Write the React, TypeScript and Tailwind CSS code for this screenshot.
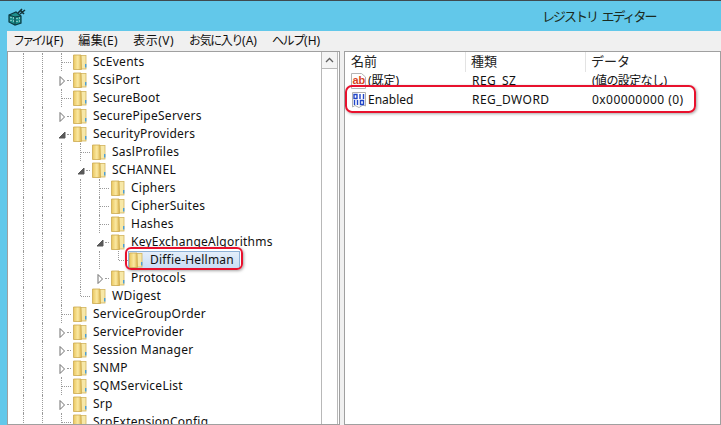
const font = "font-['Noto_Sans','Noto_Sans_CJK_JP',sans-serif]";

type Node = "open" | "closed" | "leaf" | "last";
type Row = { name: string; level: number; node: Node; selected?: boolean };

const rows: Row[] = [
  { name: "ScEvents", level: 0, node: "leaf" },
  { name: "ScsiPort", level: 0, node: "closed" },
  { name: "SecureBoot", level: 0, node: "leaf" },
  { name: "SecurePipeServers", level: 0, node: "closed" },
  { name: "SecurityProviders", level: 0, node: "open" },
  { name: "SaslProfiles", level: 1, node: "leaf" },
  { name: "SCHANNEL", level: 1, node: "open" },
  { name: "Ciphers", level: 2, node: "leaf" },
  { name: "CipherSuites", level: 2, node: "leaf" },
  { name: "Hashes", level: 2, node: "leaf" },
  { name: "KeyExchangeAlgorithms", level: 2, node: "open" },
  { name: "Diffie-Hellman", level: 3, node: "last", selected: true },
  { name: "Protocols", level: 2, node: "closed" },
  { name: "WDigest", level: 1, node: "last" },
  { name: "ServiceGroupOrder", level: 0, node: "leaf" },
  { name: "ServiceProvider", level: 0, node: "closed" },
  { name: "Session Manager", level: 0, node: "closed" },
  { name: "SNMP", level: 0, node: "closed" },
  { name: "SQMServiceList", level: 0, node: "leaf" },
  { name: "Srp", level: 0, node: "closed" },
  { name: "SrpExtensionConfig", level: 0, node: "leaf" },
];

function Folder() {
  return (
    <svg width="14" height="16" viewBox="0 0 14 16" className="shrink-0">
      <defs>
        <linearGradient id="leaf" x1="0" y1="0" x2="1" y2="0">
          <stop offset="0" stopColor="#e9c65f" />
          <stop offset="0.55" stopColor="#fbe9a2" />
          <stop offset="1" stopColor="#dcb44e" />
        </linearGradient>
      </defs>
      <rect x="6" y="1.5" width="7" height="13.5" fill="#f7e8a8" stroke="#d2b35c" strokeWidth="0.8" />
      <path d="M0.5 1 L8 1 L8.5 15.5 L0.5 15.5 Z" fill="url(#leaf)" stroke="#cba94f" strokeWidth="0.8" />
      <rect x="12" y="10" width="1.4" height="3.5" fill="#4b9fd8" />
    </svg>
  );
}

function NodeCell({ node }: { node: Node }) {
  return (
    <div className="relative w-[19px] h-[18px] shrink-0">
      {node === "last" && <div className="absolute left-[9px] top-0 h-[9px] border-l border-dotted border-[#9a9a9a]" />}
      {node === "leaf" && <div className="absolute left-[9px] top-0 h-[18px] border-l border-dotted border-[#9a9a9a]" />}
      {(node === "last" || node === "leaf") && (
        <div className="absolute left-[10px] top-[9px] w-[9px] border-t border-dotted border-[#9a9a9a]" />
      )}
      {(node === "closed" || node === "open") && (
        <div className="absolute left-[15px] top-[9px] w-[4px] border-t border-dotted border-[#9a9a9a]" />
      )}
      {node === "closed" && (
        <svg width="7" height="10" viewBox="0 0 7 10" className="absolute left-[7px] top-[5px]">
          <path d="M1 .5 L5.5 5 L1 9.5 Z" fill="#fff" stroke="#6f6f6f" />
        </svg>
      )}
      {node === "open" && (
        <svg width="8" height="8" viewBox="0 0 8 8" className="absolute left-[6px] top-[6px]">
          <path d="M7 1 L7 7 L1 7 Z" fill="#595959" stroke="#595959" />
        </svg>
      )}
    </div>
  );
}

function TreeRow({ row }: { row: Row }) {
  const cells = Array.from({ length: row.level + 2 });
  return (
    <div className="flex items-center h-[18px]">
      {cells.map((_, i) => (
        <div key={i} className="w-[19px] h-[18px] shrink-0 pl-[9px]">
          <div className="h-full border-l border-dotted border-[#9a9a9a]" />
        </div>
      ))}
      <NodeCell node={row.node} />
      <div className="w-[2px] shrink-0" />
      {row.selected ? (
        <div className="relative -ml-[2px] flex items-center h-[18px] w-[112px] bg-gradient-to-b from-[#e4eefa] to-[#c9def5] border border-[#8fb2d6]">
          <Folder />
          <span className="ml-[7px] text-[12px] tracking-[0.2px] text-[#111]">{row.name}</span>
          <div className="absolute -left-[4px] -top-[5px] w-[118px] h-[23px] rounded-[6px] border-2 border-[#e8112d] shadow-[1px_1px_3px_rgba(0,0,0,0.35)]" />
        </div>
      ) : (
        <>
          <Folder />
          <span className="ml-[6px] text-[12px] tracking-[0.25px] text-[#111] whitespace-nowrap">{row.name}</span>
        </>
      )}
    </div>
  );
}

function Scrollbar() {
  return (
    <div className="w-[17px] mr-[1px] shrink-0 border-x border-[#b8b8b8] bg-white flex flex-col">
      <div className="h-[17px] flex items-center justify-center bg-[#f4f4f4] border-b border-[#b8b8b8]">
        <svg width="9" height="6" viewBox="0 0 9 6">
          <path d="M1 5 L4.5 1.5 L8 5" fill="none" stroke="#606060" strokeWidth="1.3" />
        </svg>
      </div>
      <div className="flex-1" />
    </div>
  );
}

function RegSzIcon() {
  return (
    <svg width="16" height="16" viewBox="0 0 16 16" className="shrink-0">
      <path d="M0.5 .5 H10.5 L14.5 4 V15.5 H0.5 Z" fill="#fff" stroke="#b5b5b5" />
      <text x="1.5" y="11" fontSize="11" fontWeight="700" fill="#d8451f" fontFamily="Liberation Sans">ab</text>
    </svg>
  );
}

function RegBinIcon() {
  return (
    <svg width="16" height="16" viewBox="0 0 16 16" className="shrink-0">
      <path d="M1.5 .5 H14.5 V14 L12 13 L8 15.5 L4 13.5 L1.5 15 Z" fill="#fff" stroke="#b0b0b0" />
      <path d="M3 2.5 H6 V6.5 H3 Z M9 2 V7 M12.5 2 V7 M3.5 8 V13 M6.5 8 V13 M9.5 8.5 H12.5 V12.5 H9.5 Z" fill="none" stroke="#2146c7" strokeWidth="1.4" />
    </svg>
  );
}

function ListRow({ icon, name, type, data, dataClass }: { icon: React.ReactNode; name: string; type: string; data: string; dataClass: string }) {
  return (
    <div className="flex items-center h-[19px] pl-[6px] text-[12px] text-[#111]">
      {icon}
      <span className="w-[104px] ml-[1px]">{name}</span>
      <span className="w-[120px] tracking-[0.45px]">{type}</span>
      <span className={dataClass}>{data}</span>
    </div>
  );
}

export default function App() {
  return (
    <div className={`${font} w-[721px] h-[425px] overflow-hidden bg-[#62c8ea] flex flex-col`}>
      <div className="h-[1px] bg-[#3f4a50]" />
      <div className="h-[30px] shrink-0 flex items-center relative">
        <svg width="18" height="18" viewBox="0 0 18 18" className="ml-[8px] mt-[1px]">
          <path d="M1 7 L8 4 L13 8 L13 15 L7 17 L1 14 Z" fill="#1d8f8c" stroke="#0b3a42" strokeWidth="1.2" />
          <path d="M7 9 V17 M1 7 L7 9 L13 8" stroke="#0b3a42" strokeWidth="1" fill="none" />
          <path d="M2.5 9.5 H3.5 M5 10 H6 M2.5 12.5 H3.5 M5 13 H6 M8.5 10.5 H9.5 M11 10 H12 M8.5 13.5 H9.5 M11 13 H12" stroke="#d8f6f0" strokeWidth="1.2" fill="none" />
          <path d="M10 5 L14 1 M12 6 L17 2 M13 3 L16 6" stroke="#123338" strokeWidth="1.6" fill="none" />
        </svg>
        <span className="absolute left-[542px] top-[6px] text-[13px] tracking-[-2px] [word-spacing:3px] text-[#1b2a20] whitespace-nowrap">レジストリ エディター</span>
      </div>
      <div className="flex-1 ml-[7px] bg-[#f0f0f0] flex flex-col min-h-0">
        <div className="h-[20px] shrink-0 flex items-center text-[12px] text-[#111] whitespace-nowrap">
          <span className="ml-[6px]"><span className="tracking-[-2.8px]">ファイル</span>(F)</span>
          <span className="ml-[15px] tracking-[0.4px]">編集(E)</span>
          <span className="ml-[15px] tracking-[0.5px]">表示(V)</span>
          <span className="ml-[15px]"><span className="tracking-[-1.4px]">お気に入り</span>(A)</span>
          <span className="ml-[15px]"><span className="tracking-[-1.3px]">ヘルプ</span>(H)</span>
        </div>
        <div className="flex-1 flex min-h-0">
          <div className="w-[333px] shrink-0 border border-[#a0a0a0] bg-white flex min-h-0 overflow-hidden">
            <div className="flex-1 pl-[6px] pt-[1px] overflow-hidden">
              {rows.map((r) => (
                <TreeRow key={r.name} row={r} />
              ))}
            </div>
            <Scrollbar />
          </div>
          <div className="w-[4px] shrink-0" />
          <div className="flex-1 border border-[#a0a0a0] bg-white relative overflow-hidden">
            <div className="flex h-[19px] pt-[2px] items-center text-[13px] text-[#222] border-b border-white">
              <span className="w-[121px] pl-[6px] border-r border-[#e3e3e3]">名前</span>
              <span className="w-[120px] pl-[5px] border-r border-[#e3e3e3]">種類</span>
              <span className="pl-[5px]">データ</span>
            </div>
            <ListRow icon={<RegSzIcon />} name="(既定)" type="REG_SZ" data="(値の設定なし)" dataClass="tracking-[-0.6px]" />
            <div className="relative">
              <ListRow icon={<RegBinIcon />} name="Enabled" type="REG_DWORD" data="0x00000000 (0)" dataClass="tracking-[0.45px]" />
              <div className="absolute left-0 -top-[5px] w-[351px] h-[28px] rounded-[7px] border-2 border-[#e8112d] shadow-[1px_1px_3px_rgba(0,0,0,0.35)]" />
            </div>
          </div>
        </div>
      </div>
    </div>
  );
}
